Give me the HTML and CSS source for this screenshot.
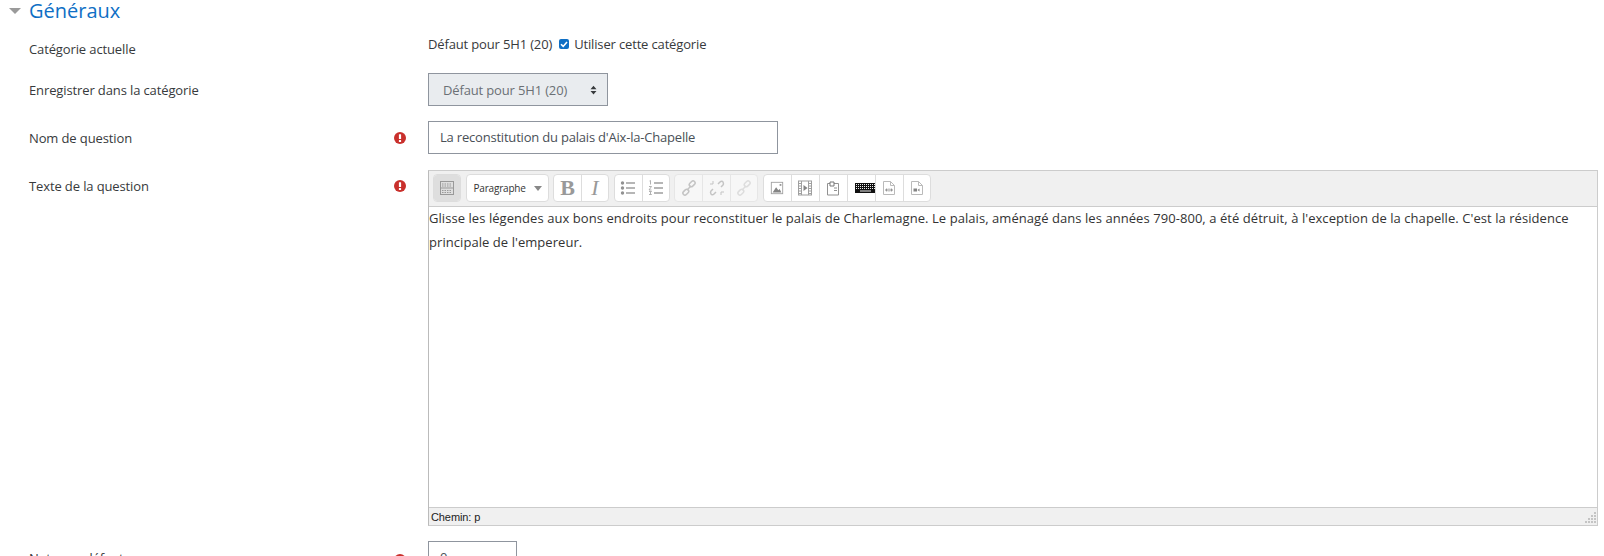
FILE: index.html
```html
<!DOCTYPE html>
<html lang="fr">
<head>
<meta charset="utf-8">
<title>Généraux</title>
<link rel="stylesheet" href="styles.css">
</head>
<body>
<svg width="0" height="0" class="defs">
  <symbol id="req" viewBox="0 0 12 12"><circle cx="6" cy="6" r="6" fill="#c9302c"/><rect x="4.9" y="2.2" width="2.2" height="4.9" rx=".4" fill="#fff"/><rect x="4.9" y="8" width="2.2" height="2" rx=".3" fill="#fff"/></symbol>
</svg>
<main class="form">
  <h2 class="section"><span class="caret"></span><span>Généraux</span></h2>

  <div class="row row-current">
    <div class="label">Catégorie actuelle</div><div class="ind"></div>
    <div class="field inline">Défaut pour 5H1 (20)
      <span class="check"><svg width="10" height="10" viewBox="0 0 10 10"><path d="M2 5.2l2.2 2.2L8 3" fill="none" stroke="#fff" stroke-width="1.6"/></svg></span>
      <span>Utiliser cette catégorie</span></div>
  </div>

  <div class="row row-select">
    <div class="label">Enregistrer dans la catégorie</div><div class="ind"></div>
    <div class="field"><div class="select">Défaut pour 5H1 (20)
      <svg class="updown" width="7" height="10" viewBox="0 0 8 10"><path d="M4 0l3.4 4H.6zM4 10L.6 6h6.8z" fill="#373a3c"/></svg></div></div>
  </div>

  <div class="row row-name">
    <div class="label">Nom de question</div>
    <div class="ind"><svg width="12" height="12"><use href="#req"/></svg></div>
    <div class="field"><div class="input wide">La reconstitution du palais d'Aix-la-Chapelle</div></div>
  </div>

  <div class="row row-editor">
    <div class="label">Texte de la question</div>
    <div class="ind"><svg width="12" height="12"><use href="#req"/></svg></div>
    <div class="field">
      <div class="editor">
        <div class="toolbar">
          <div class="group"><span class="btn active"><svg width="16" height="16" viewBox="0 0 16 16"><g fill="none" stroke="#999"><rect x="1.500" y="1.500" width="13" height="13"/><path d="M1.500 8h13"/></g><path d="M3 4h10M3 6h10M3 10.500h10M3 12.500h10" stroke="#999" stroke-dasharray="1.500 1"/></svg></span></div>
          <div class="group format"><span class="fmt">Paragraphe</span><span class="tri"></span></div>
          <div class="group"><span class="btn txt b">B</span><span class="btn txt i">I</span></div>
          <div class="group soft">
            <span class="btn"><svg width="16" height="16" viewBox="0 0 16 16"><g fill="#777"><circle cx="2.500" cy="3" r="1.700"/><circle cx="2.500" cy="8" r="1.700"/><circle cx="2.500" cy="13" r="1.700"/></g><path d="M6 3h9M6 8h9M6 13h9" stroke="#888" stroke-width="1.500"/></svg></span>
            <span class="btn"><svg width="16" height="16" viewBox="0 0 16 16"><path d="M1.500 1l1-.5v4M1 6.500h2.500L1 10h2.500M1 11.500h2.500L2 13l1.500 1.500H1" fill="none" stroke="#888" stroke-width=".8"/><path d="M6 3h9M6 8h9M6 13h9" stroke="#888" stroke-width="1.500"/></svg></span>
          </div>
          <div class="group faded">
            <span class="btn"><svg width="16" height="16" viewBox="0 0 16 16"><g fill="none" stroke="#999" stroke-width="1.500"><rect x="8" y="2" width="6.500" height="4" rx="2" transform="rotate(-45 11 4)"/><rect x="1.500" y="10" width="6.500" height="4" rx="2" transform="rotate(-45 5 12)"/><path d="M6 10l4-4"/></g></svg></span>
            <span class="btn"><svg width="16" height="16" viewBox="0 0 16 16"><g fill="none" stroke="#999" stroke-width="1.500"><path d="M9 4l2-2c1-1 2.500-1 3 0s1 2 0 3l-2 2M7 12l-2 2c-1 1-2.500 1-3 0s-1-2 0-3l2-2"/><path d="M1 4h3M4 1v3M12 15v-3M15 12h-3" stroke-width="1"/></g></svg></span>
            <span class="btn"><svg width="16" height="16" viewBox="0 0 16 16"><g fill="none" stroke="#ccc" stroke-width="1.500"><rect x="8" y="2" width="6.500" height="4" rx="2" transform="rotate(-45 11 4)"/><rect x="1.500" y="10" width="6.500" height="4" rx="2" transform="rotate(-45 5 12)"/><path d="M6 10l4-4"/></g></svg></span>
          </div>
          <div class="group soft">
            <span class="btn"><svg width="14" height="14" viewBox="0 0 16 16"><rect x="1.500" y="1.500" width="13" height="13" fill="none" stroke="#888"/><path d="M3 13l4-6 2.500 3.500L11 9l2 4z" fill="#666"/><rect x="11" y="3.500" width="2" height="2" fill="#777"/></svg></span>
            <span class="btn"><svg width="16" height="16" viewBox="0 0 16 16"><rect x="1.500" y="1" width="13" height="14" fill="none" stroke="#888"/><path d="M4.500 1v14M11.500 1v14M2 3.500h2M2 6h2M2 8.500h2M2 11h2M2 13.500h2M12 3.500h2M12 6h2M12 8.500h2M12 11h2M12 13.500h2" stroke="#888"/><path d="M6.500 5l4 3-4 3z" fill="#666"/></svg></span>
            <span class="btn"><svg width="14" height="16" viewBox="0 0 14 16"><path d="M1.500 3.500h11V15h-11z" fill="none" stroke="#777"/><path d="M4 2h4v4H4z" fill="#fff" stroke="#555"/><path d="M8 8h3M8 10.500h3" stroke="#777"/></svg></span>
            <span class="btn key"><svg class="kbd" width="21" height="10" viewBox="0 0 21 10"><rect width="21" height="10" fill="#111"/><path d="M1 1.500h19M1 3.500h19M1 5.500h19" stroke="#eee" stroke-dasharray="1 1"/><path d="M5 8h11" stroke="#eee"/></svg></span>
            <span class="btn"><svg width="14" height="16" viewBox="0 0 14 16"><path d="M1.500 1.500h7l4 4v9h-11z M8.500 1.500v4h4" fill="none" stroke="#aaa"/><path d="M3.500 10l1.500-1.200v2.400zM10.500 10L9 8.800v2.400zM7 8.500v3" stroke="#777" fill="#777"/></svg></span>
            <span class="btn"><svg width="14" height="16" viewBox="0 0 14 16"><path d="M1.500 1.500h7l4 4v9h-11z M8.500 1.500v4h4" fill="none" stroke="#aaa"/><path d="M3.500 8.500h3.500v3H3.500zM7.500 10l2-1.500v3z" fill="#666"/></svg></span>
          </div>
        </div>
        <div class="content">Glisse les légendes aux bons endroits pour reconstituer le palais de Charlemagne. Le palais, aménagé dans les années 790-800, a été détruit, à l'exception de la chapelle. C'est la résidence principale de l'empereur.</div>
        <div class="status"><span>Chemin: p</span>
          <svg class="grip" width="14" height="14" viewBox="0 0 14 14"><path d="M11 1h2v2h-2zM8 4h2v2H8zM11 4h2v2h-2zM5 7h2v2H5zM8 7h2v2H8zM11 7h2v2h-2zM2 10h2v2H2zM5 10h2v2H5zM8 10h2v2H8zM11 10h2v2h-2z" fill="#c4c4c4"/></svg></div>
      </div>
    </div>
  </div>

  <div class="row row-mark">
    <div class="label">Note par défaut</div>
    <div class="ind"><svg width="12" height="12"><use href="#req"/></svg></div>
    <div class="field"><div class="input narrow">0</div></div>
  </div>
</main>
</body>
</html>
```

FILE: styles.css
```css
html, body { margin: 0; padding: 0; height: 556px; overflow: hidden; background: #fff; }
body { font-family: "Open Sans", "Noto Sans", sans-serif; font-size: 13px; color: #373a3c; }
.defs { position: absolute; }
.form { padding-left: 29px; }
.section { display: flex; align-items: center; margin: 0 0 0 -20px; height: 21px; font-weight: 400; font-size: 20px; line-height: 21px; color: #0f6fc5; }
.caret { width: 0; height: 0; border: 6px solid transparent; border-top: 6px solid #9a9a9a; border-bottom: 0; margin: 0 8px 0 0; }
.row { display: grid; grid-template-columns: 365px 34px 1170px; }
.label { color: #373a3c; line-height: 20px; padding-top: 1px; letter-spacing: -.12px; }
.ind { padding-top: 5px; }
.field { min-width: 0; }
.inline { display: flex; align-items: center; align-self: start; line-height: 20px; letter-spacing: -.15px; }
.row-current { margin-top: 13px; height: 39px; }
.row-current .label { padding-top: 5px; }
.row-select { height: 48px; }
.row-select .label { padding-top: 7px; }
.row-name { height: 49px; }
.row-name .label { padding-top: 7px; }
.row-name .ind { padding-top: 9px; }
.row-editor { height: 371px; }
.row-editor .label { padding-top: 6px; }
.row-editor .ind { padding-top: 8px; }
.row-mark .label { padding-top: 7px; }
.row-mark .ind { padding-top: 11px; }
.check { display: inline-flex; align-items: center; justify-content: center; width: 10px; height: 10px; margin: 0 5px 0 7px; border-radius: 2px; background: #0f6fc5; }
.select { box-sizing: border-box; display: flex; align-items: center; justify-content: space-between; width: 180px; height: 33px; padding: 0 10px 0 14px; background: #e9ecef; border: 1px solid #8f959e; color: #6b7075; letter-spacing: -.15px; }
.input { box-sizing: border-box; height: 33px; line-height: 31px; padding: 0 11px; border: 1px solid #8f959e; color: #495057; letter-spacing: -.2px; }
.wide { width: 350px; }
.narrow { width: 89px; }
.editor { box-sizing: border-box; width: 1170px; height: 356px; display: flex; flex-direction: column; border: 1px solid #ccc; border-left-color: #bbb; }
.toolbar { box-sizing: border-box; flex: none; height: 36px; display: flex; align-items: flex-start; gap: 4.5px; padding: 3px 4px 0; background: #f0f0f0; border-bottom: 1px solid #ccc; }
.group { display: flex; height: 28px; box-sizing: border-box; background: #fff; border: 1px solid #ddd; border-radius: 4px; }
.btn { box-sizing: border-box; display: flex; align-items: center; justify-content: center; width: 28px; height: 26px; border-left: 1px solid #ddd; }
.btn:first-child { width: 27px; border-left: 0; }
.btn:last-child { width: 27px; }
.btn:only-child { width: 26px; }
.active { background: #dedede; border-radius: 3px; }
.txt { font-family: "Liberation Serif", serif; font-size: 22px; color: #999; }
.b { font-weight: 700; }
.i { font-style: italic; }
.soft svg { opacity: .8; }
.soft .kbd { opacity: 1; }
.faded { opacity: .5; }
.format { width: 83px; align-items: center; padding-left: 7px; }
.fmt { font-size: 10px; color: #333; font-weight: 500; letter-spacing: -.2px; }
.tri { margin-left: 8px; border: 4.500px solid transparent; border-top: 5px solid #888; border-bottom: 0; }
.key { justify-content: flex-end; }
.kbd { flex: none; margin-right: -1px; }
.content { flex: 1; margin-top: -1px; padding: 0; color: #333; line-height: 24px; letter-spacing: .06px; }
.status { flex: none; box-sizing: border-box; height: 18px; display: flex; justify-content: space-between; align-items: flex-end; padding-left: 2px; background: #f0f0f0; border-top: 1px solid #ccc; font-family: "Liberation Sans", sans-serif; font-size: 11px; line-height: 16px; color: #222; letter-spacing: -.1px; }
.status span { align-self: center; }
.grip { flex: none; }
```
